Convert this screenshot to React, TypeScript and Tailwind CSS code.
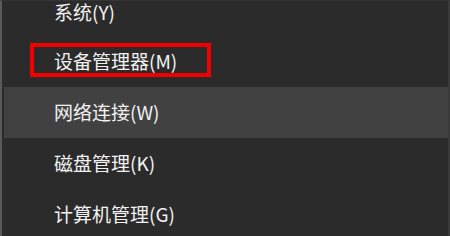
import React from "react";

const items = [
  { label: "系统(Y)", first: true },
  { label: "设备管理器(M)", marked: true },
  { label: "网络连接(W)", active: true },
  { label: "磁盘管理(K)" },
  { label: "计算机管理(G)" },
];

const App = () => {
  return (
    <div
      className="h-[236px] w-[450px] overflow-hidden border-l-2 border-r-2 border-t border-l-[#5a5a5a] border-r-[#3a3a3a] border-t-[#353535] bg-[#2b2b2b] text-[#f2f2f2]"
      style={{ fontFamily: '"Noto Sans CJK SC", "Noto Sans", sans-serif' }}
    >
      <div className="flex flex-col">
        {items.map((item) => (
          <div
            key={item.label}
            className={`relative flex pl-[52px] text-[19px] ${
              item.first ? "h-[35px] items-start leading-[22px]" : "h-[51px] items-center"
            } ${item.active ? "ml-[2px] bg-[#414141]" : ""}`}
          >
            <span className={item.active ? "-ml-[2px]" : ""}>{item.label}</span>
            {item.marked && (
              <div className="absolute left-[28px] top-[7px] h-[34px] w-[181px] border-[4px] border-[#f00000]" />
            )}
          </div>
        ))}
      </div>
    </div>
  );
};

export default App;
